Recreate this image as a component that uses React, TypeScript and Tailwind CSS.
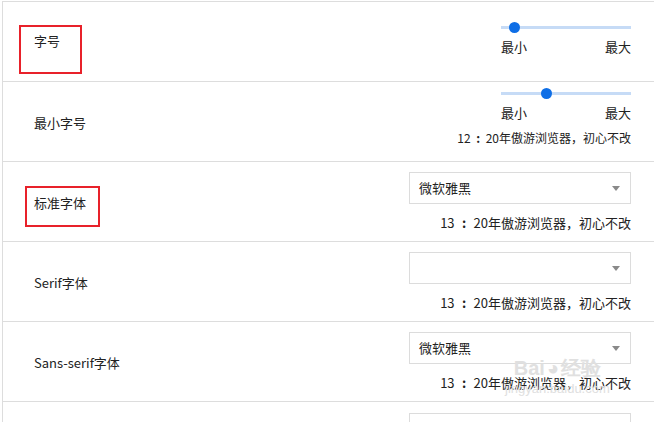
import React from "react";

const FONT = { fontFamily: '"Noto Sans CJK SC", "Noto Sans", sans-serif' };

function Slider({ pos }: { pos: number }) {
  return (
    <div className="w-[130px]">
      <div className="relative h-[10px]">
        <div className="absolute left-0 right-0 top-[4px] h-[3px] bg-[#c6dbf6]" />
        <div
          className="absolute top-0 h-[11px] w-[11px] rounded-full bg-[#0e6ee6]"
          style={{ left: pos - 5 }}
        />
      </div>
      <div className="mt-[6px] flex justify-between text-[13px] leading-[18px] text-[#222]">
        <span>最小</span>
        <span>最大</span>
      </div>
    </div>
  );
}

function Select({ value }: { value?: string }) {
  return (
    <div className="flex h-[32px] w-[222px] items-center justify-between border border-[#dcdcdc] bg-white pl-[9px] pr-[10px]">
      <span className="text-[13px] text-[#222]">{value ?? ""}</span>
      <svg width="8" height="5" viewBox="0 0 8 5">
        <polygon points="0,0 8,0 4,5" fill="#8a8a8a" />
      </svg>
    </div>
  );
}

function Caption({ n }: { n: string }) {
  return (
    <div className="mt-[10px] flex text-[13px] leading-[18px] text-[#222]">
      <span>{n}</span>
      <span className="inline-block w-[19px] text-center font-bold">:</span>
      <span>20年傲游浏览器，初心不改</span>
    </div>
  );
}

export default function App() {
  return (
    <div className="h-[422px] w-[654px] overflow-hidden bg-white pl-[2px] pt-[1px]" style={FONT}>
      <div className="relative border-l border-[#dddddd]">
        {/* Row 1 */}
        <div className="flex h-[80px] justify-between border-t border-[#dddddd]">
          <div className="relative flex items-center pl-[31px] pb-[2px] text-[13px] text-[#222]">
            <span>字号</span>
            <div className="absolute left-[16px] top-[23px] h-[49px] w-[63px] border-2 border-[#e8212a]" />
          </div>
          <div className="pr-[23px] pt-[20px]">
            <Slider pos={13} />
          </div>
        </div>
        {/* Row 2 */}
        <div className="flex h-[80px] justify-between border-t border-[#dddddd]">
          <div className="flex items-center pl-[31px] pt-[2px] text-[13px] text-[#222]">
            <span>最小字号</span>
          </div>
          <div className="flex flex-col items-end pr-[23px] pt-[6px]">
            <Slider pos={45} />
            <div className="mt-[8px] flex text-[12px] leading-[16px] text-[#222]">
              <span>12</span>
              <span className="inline-block w-[15px] text-center font-bold">:</span>
              <span>20年傲游浏览器，初心不改</span>
            </div>
          </div>
        </div>
        {/* Row 3 */}
        <div className="flex h-[80px] justify-between border-t border-[#dddddd]">
          <div className="relative flex items-center pl-[31px] pt-[2px] text-[13px] text-[#222]">
            <span>标准字体</span>
            <div className="absolute left-[22px] top-[24px] h-[41px] w-[75px] border-2 border-[#e8212a]" />
          </div>
          <div className="flex flex-col items-end pr-[23px] pt-[10px]">
            <Select value="微软雅黑" />
            <Caption n="13" />
          </div>
        </div>
        {/* Row 4 */}
        <div className="flex h-[80px] justify-between border-t border-[#dddddd]">
          <div className="flex items-center pl-[31px] pt-[2px] text-[13px] text-[#222]">
            <span>Serif字体</span>
          </div>
          <div className="flex flex-col items-end pr-[23px] pt-[10px]">
            <Select />
            <Caption n="13" />
          </div>
        </div>
        {/* Row 5 */}
        <div className="flex h-[80px] justify-between border-t border-[#dddddd]">
          <div className="flex items-center pl-[31px] pt-[2px] text-[13px] text-[#222]">
            <span>Sans-serif字体</span>
          </div>
          <div className="flex flex-col items-end pr-[23px] pt-[10px]">
            <Select value="微软雅黑" />
            <Caption n="13" />
          </div>
        </div>
        {/* Row 6 */}
        <div className="flex h-[80px] justify-end border-t border-[#dddddd]">
          <div className="pr-[23px] pt-[11px]">
            <Select />
          </div>
        </div>
        {/* watermark */}
        <div className="pointer-events-none absolute left-[502px] top-[356px] flex flex-col items-center text-[#e0e0e0]">
          <div className="text-[20px] font-bold leading-[22px]" style={{ fontFamily: '"Liberation Sans", sans-serif' }}>
            Bai<span className="mx-[2px]">◕</span>经验
          </div>
          <div className="mt-[2px] text-[13px] leading-[16px]" style={{ fontFamily: '"Liberation Sans", sans-serif' }}>
            jingyan.baidu.com
          </div>
        </div>
      </div>
    </div>
  );
}
